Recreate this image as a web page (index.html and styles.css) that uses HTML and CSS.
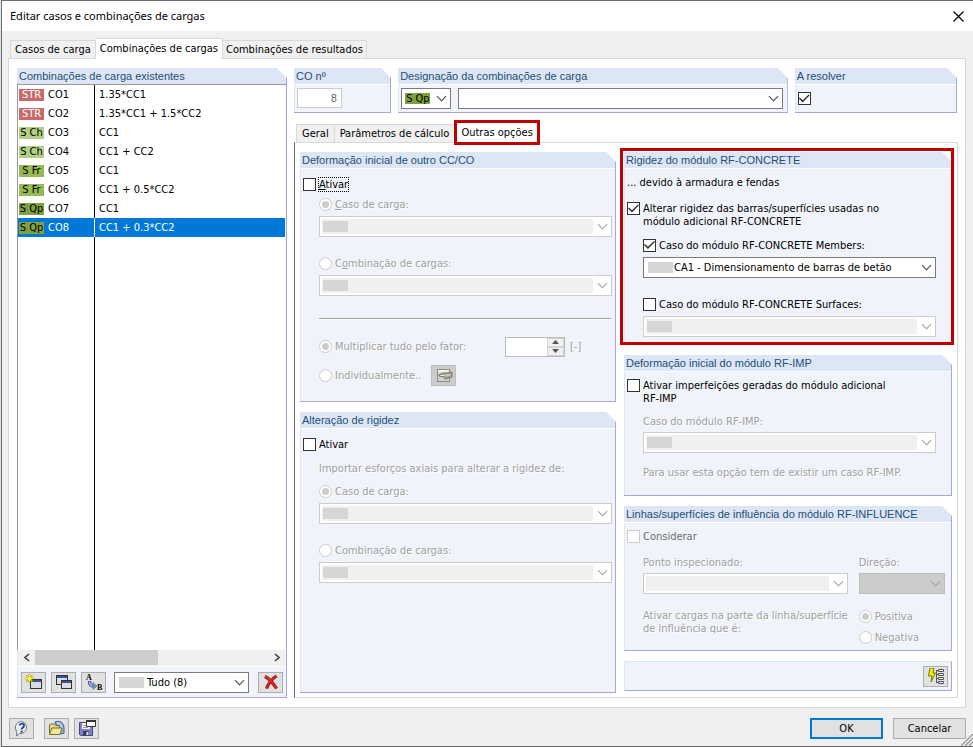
FILE: index.html
```html
<!DOCTYPE html>
<html lang="pt">
<head>
  <meta charset="UTF-8">
  <meta name="viewport" content="width=device-width, initial-scale=1">
  <title>Editar casos e combinações de cargas</title>
  <link rel="stylesheet" href="styles.css">
</head>
<body>
  <div class="dialog">
    <header class="titlebar">
      <h1>Editar casos e combinações de cargas</h1>
      <button class="close" aria-label="Fechar">
        <svg width="11" height="11" viewBox="0 0 11 11"><path d="M.5 .5l10 10M10.5 .5l-10 10" stroke="#000" stroke-width="1.2"/></svg>
      </button>
    </header>

    <nav class="tabs main-tabs">
      <button class="tab">Casos de carga</button>
      <button class="tab active">Combinações de cargas</button>
      <button class="tab">Combinações de resultados</button>
    </nav>

    <main class="pane">
      <section class="group list-panel">
        <h2>Combinações de carga existentes</h2>
        <div class="list">
          <table>
            <tr><td><span class="badge str">STR</span>CO1</td><td>1.35*CC1</td></tr>
            <tr><td><span class="badge str">STR</span>CO2</td><td>1.35*CC1 + 1.5*CC2</td></tr>
            <tr><td><span class="badge ch">S Ch</span>CO3</td><td>CC1</td></tr>
            <tr><td><span class="badge ch">S Ch</span>CO4</td><td>CC1 + CC2</td></tr>
            <tr><td><span class="badge fr">S Fr</span>CO5</td><td>CC1</td></tr>
            <tr><td><span class="badge fr">S Fr</span>CO6</td><td>CC1 + 0.5*CC2</td></tr>
            <tr><td><span class="badge qp">S Qp</span>CO7</td><td>CC1</td></tr>
            <tr class="selected"><td><span class="badge qp">S Qp</span>CO8</td><td>CC1 + 0.3*CC2</td></tr>
          </table>
        </div>
        <div class="scrollbar">
          <svg width="17" height="15" viewBox="0 0 17 15"><path d="M11 4L7 7.500l4 3.500" fill="none" stroke="#404040" stroke-width="1.600"/></svg>
          <div class="track"><div class="thumb"></div></div>
          <svg width="17" height="15" viewBox="0 0 17 15"><path d="M7 4l4 3.500L7 11" fill="none" stroke="#404040" stroke-width="1.600"/></svg>
        </div>
        <div class="list-tools">
          <button class="tool" aria-label="Novo">
            <svg width="18" height="17" viewBox="0 0 18 17">
              <rect x="5.500" y="5.500" width="11" height="9" fill="#d9dce0" stroke="#333"/>
              <path d="M6 6h10v2H6z" fill="#38529c"/>
              <path d="M4.500 0v9M0 4.500h9M1.500 1.500l6 6M7.500 1.500l-6 6" stroke="#b8a800" stroke-width="1.600"/>
              <path d="M4.500 1v7M1 4.500h7M2.500 2.500l4 4M6.500 2.500l-4 4" stroke="#fff34a"/>
            </svg>
          </button>
          <button class="tool" aria-label="Copiar">
            <svg width="18" height="17" viewBox="0 0 18 17">
              <rect x="1.500" y="1.500" width="11" height="9" fill="#d9dce0" stroke="#333"/>
              <path d="M2 2h10v2H2z" fill="#38529c"/>
              <rect x="6.500" y="6.500" width="10" height="8" fill="#d9dce0" stroke="#333"/>
              <path d="M7 7h9v2H7z" fill="#38529c"/>
            </svg>
          </button>
          <button class="tool" aria-label="Renumerar">
            <svg width="18" height="17" viewBox="0 0 18 17">
              <text x="1" y="6" class="ab">A</text>
              <text x="12" y="16" class="ab">B</text>
              <path d="M4.500 7c0 3.500 1 5 4.500 5" fill="none" stroke="#38548c" stroke-width="3.500"/>
              <path d="M4.500 7.500c0 3 1 4.500 4.500 4.500" fill="none" stroke="#a9c0e6" stroke-width="1.500"/>
              <path d="M8 8.500l4 3.500-4 3.500z" fill="#7895c8" stroke="#38548c" stroke-width=".5"/>
            </svg>
          </button>
          <div class="combo filter">
            <select class="swatch" aria-label="Filtro"><option>Tudo (8)</option></select>
          </div>
          <button class="tool" aria-label="Apagar">
            <svg width="18" height="17" viewBox="0 0 18 17">
              <path d="M3 2.500C7 4.500 11 9 14.500 14.500M14.500 2C9.500 5 6.500 9.500 4.500 14.500" fill="none" stroke="#6e1414" stroke-width="3.200"/>
              <path d="M3 2.500C7 4.500 11 9 14.500 14.500M14.500 2C9.500 5 6.500 9.500 4.500 14.500" fill="none" stroke="#e02424" stroke-width="2"/>
            </svg>
          </button>
        </div>
      </section>

      <div class="details">
        <div class="top-groups">
          <section class="group">
            <h2><label for="co-no">CO nº</label></h2>
            <div class="top-body"><input id="co-no" class="number" type="text" value="8" disabled></div>
          </section>
          <section class="group">
            <h2><label for="co-name">Designação da combinações de carga</label></h2>
            <div class="top-body designation">
              <div class="combo kind"><select aria-label="Tipo"><option>S Qp</option></select></div>
              <div class="combo"><select id="co-name"><option></option></select></div>
            </div>
          </section>
          <section class="group">
            <h2><label for="solve">A resolver</label></h2>
            <div class="top-body solve"><input id="solve" type="checkbox" checked></div>
          </section>
        </div>

        <nav class="tabs sub-tabs">
          <button class="tab">Geral</button>
          <button class="tab">Parâmetros de cálculo</button>
          <button class="tab active marked">Outras opções</button>
        </nav>

        <div class="options">
          <div class="column">
            <section class="group">
              <h2>Deformação inicial de outro CC/CO</h2>
              <div class="body initial">
                <label class="check focus"><input type="checkbox"><span><u>A</u>tivar</span></label>
                <div class="indent">
                  <label class="check off"><input type="radio" name="def" checked disabled><span><u>C</u>aso de carga:</span></label>
                  <div class="combo"><select class="swatch" aria-label="Caso de carga" disabled><option></option></select></div>
                  <label class="check off spaced"><input type="radio" name="def" disabled><span>C<u>o</u>mbinação de cargas:</span></label>
                  <div class="combo"><select class="swatch" aria-label="Combinação de cargas" disabled><option></option></select></div>
                  <hr>
                  <div class="factor">
                    <label class="check off"><input type="radio" name="mode" checked disabled><span>Multiplicar tudo pelo fator:</span></label>
                    <div class="spin">
                      <input type="text" aria-label="Fator" disabled>
                      <button aria-label="Mais" disabled><svg width="7" height="4" viewBox="0 0 7 4"><path d="M0 4l3.500-4L7 4z" fill="#555"/></svg></button>
                      <button aria-label="Menos" disabled><svg width="7" height="4" viewBox="0 0 7 4"><path d="M0 0l3.500 4L7 0z" fill="#555"/></svg></button>
                    </div>
                    <span class="off">[-]</span>
                  </div>
                  <div class="single">
                    <label class="check off"><input type="radio" name="mode" disabled><span>Individualmente..</span></label>
                    <button class="tool" aria-label="Editar" disabled>
                      <svg width="18" height="17" viewBox="0 0 18 17">
                        <rect x="2.500" y="2.500" width="12" height="12" fill="#d2d2c8" stroke="#8c8c80"/>
                        <path d="M3 3h11v2H3z" fill="#f4f4ec"/>
                        <path d="M4 8l5-2h4l4-1v5l-4 1-3 1-1-2-5-1z" fill="#a8a89c" stroke="#77776c"/>
                        <path d="M5 8.500h5M11 8h4" stroke="#e4e4dc"/>
                      </svg>
                    </button>
                  </div>
                </div>
              </div>
            </section>

            <section class="group grow">
              <h2>Alteração de rigidez</h2>
              <div class="body">
                <label class="check"><input type="checkbox"><span>Ativar</span></label>
                <div class="indent">
                  <p class="off import">Importar esforços axiais para alterar a rigidez de:</p>
                  <label class="check off"><input type="radio" name="rig" checked disabled><span>Caso de carga:</span></label>
                  <div class="combo"><select class="swatch" aria-label="Caso de carga" disabled><option></option></select></div>
                  <label class="check off spaced"><input type="radio" name="rig" disabled><span>Combinação de cargas:</span></label>
                  <div class="combo"><select class="swatch" aria-label="Combinação de cargas" disabled><option></option></select></div>
                </div>
              </div>
            </section>
          </div>

          <div class="column">
            <div class="marked">
              <section class="group">
                <h2>Rigidez do módulo RF-CONCRETE</h2>
                <div class="body concrete">
                  <p>... devido à armadura e fendas</p>
                  <label class="check two-lines"><input type="checkbox" checked><span>Alterar rigidez das barras/superfícies usadas no módulo adicional RF-CONCRETE</span></label>
                  <div class="indent">
                    <label class="check"><input type="checkbox" checked><span>Caso do módulo RF-CONCRETE Members:</span></label>
                    <div class="combo"><select class="swatch" aria-label="Caso RF-CONCRETE Members"><option>CA1 - Dimensionamento de barras de betão</option></select></div>
                    <label class="check spaced"><input type="checkbox"><span>Caso do módulo RF-CONCRETE Surfaces:</span></label>
                    <div class="combo"><select class="swatch" aria-label="Caso RF-CONCRETE Surfaces" disabled><option></option></select></div>
                  </div>
                </div>
              </section>
            </div>

            <section class="group">
              <h2>Deformação inicial do módulo RF-IMP</h2>
              <div class="body imp">
                <label class="check two-lines"><input type="checkbox"><span>Ativar imperfeições geradas do módulo adicional RF-IMP</span></label>
                <div class="indent">
                  <label class="off line" for="imp-case">Caso do módulo RF-IMP:</label>
                  <div class="combo"><select id="imp-case" class="swatch" disabled><option></option></select></div>
                  <p class="off note">Para usar esta opção tem de existir um caso RF-IMP.</p>
                </div>
              </div>
            </section>

            <section class="group">
              <h2>Linhas/superfícies de influência do módulo RF-INFLUENCE</h2>
              <div class="body influence">
                <label class="check dim"><input type="checkbox" disabled><span>Considerar</span></label>
                <div class="indent influence-grid">
                  <div>
                    <label class="off line" for="point">Ponto inspecionado:</label>
                    <div class="combo"><select id="point" disabled><option></option></select></div>
                  </div>
                  <div>
                    <label class="off line" for="direction">Direção:</label>
                    <div class="combo"><select id="direction" class="grey" disabled><option></option></select></div>
                  </div>
                  <p class="off part">Ativar cargas na parte da linha/superfície<br>de influência que é:</p>
                  <div class="signs">
                    <label class="check off"><input type="radio" name="sign" checked disabled><span>Positiva</span></label>
                    <label class="check off"><input type="radio" name="sign" disabled><span>Negativa</span></label>
                  </div>
                </div>
              </div>
            </section>

            <div class="strip">
              <button class="tool" aria-label="Opções">
                <svg width="18" height="17" viewBox="0 0 18 17">
                  <path d="M3 0h4L6 5h2.500L4 14l1-6H1.500z" fill="#f8f000" stroke="#77750a"/>
                  <path d="M9.500 2v13M9.500 2.500h3M9.500 6.500h3M9.500 10.500h3M9.500 14.500h3" stroke="#555" fill="none"/>
                  <path d="M11.500 1.500h5v2h-5zM11.500 5.500h5v2h-5zM11.500 9.500h5v2h-5zM11.500 13.500h5v2h-5z" fill="#eee" stroke="#555"/>
                </svg>
              </button>
            </div>
          </div>
        </div>
      </div>
    </main>

    <footer class="footer">
      <button class="tool" aria-label="Ajuda">
        <svg width="18" height="17" viewBox="0 0 18 17">
          <path d="M8.500 1.500a6 6 0 1 1-2 12L3.500 16l.3-4.200A6.200 6.200 0 0 1 8.500 1.500z" fill="#eef3fa" stroke="#6b7480"/>
          <path d="M6.500 5.500c.5-2.500 4.800-2.500 4.500.3-.2 1.700-2.300 1.700-2.300 3.700" fill="none" stroke="#24408c" stroke-width="1.800"/>
          <rect x="7.500" y="10.600" width="2" height="2" fill="#24408c"/>
        </svg>
      </button>
      <button class="tool folder" aria-label="Abrir">
        <svg width="18" height="17" viewBox="0 0 18 17">
          <path d="M7 2c5-2 9 1 9 6v5l-3 1z" fill="#9bb8dc" stroke="#3d5a8c"/>
          <path d="M9 3c3 0 4.500 2 4.500 6" fill="none" stroke="#e8f0fa"/>
          <path d="M1.500 14V5l1-1h4l1 1.500h4V8" fill="#e4d88c" stroke="#77702c"/>
          <path d="M1.500 14.500L4 8h10l-2 6.500z" fill="#f2e79c" stroke="#77702c"/>
        </svg>
      </button>
      <button class="tool" aria-label="Guardar">
        <svg width="18" height="17" viewBox="0 0 18 17">
          <path d="M1.500 2.500h13v13h-12l-1-1z" fill="#7d80c8" stroke="#44477c"/>
          <path d="M4 3h8v6H4z" fill="#f4f4f8"/>
          <path d="M5 5.500h4M5 7.500h5" stroke="#999"/>
          <path d="M5 11h6v4H5z" fill="#3c3c50"/><path d="M8.500 12h2v3h-2z" fill="#e8e8f0"/>
          <path d="M8.500 .5h9v6h-9z" fill="#fff" stroke="#333"/><path d="M8 0h10v2H8z" fill="#333"/>
        </svg>
      </button>
      <button class="push default">OK</button>
      <button class="push">Cancelar</button>
      <svg class="grip" width="12" height="12" viewBox="0 0 12 12"><path d="M0 12L12 0M4 12l8-8M8 12l4-4" stroke="#8c8c8c" stroke-width="1.200"/></svg>
    </footer>
  </div>
</body>
</html>
```
FILE: styles.css
```css
* {
  box-sizing: border-box;
}
body {
  margin: 0;
  padding-left: 1px;
  background: #e3e3e3;
  font: 11px/13px "DejaVu Sans Condensed", "Liberation Sans", sans-serif;
  color: #000;
}
h1, h2, p {
  margin: 0;
  font-weight: normal;
}
button, input, select {
  font: inherit;
  color: inherit;
}
svg {
  display: block;
}

.dialog {
  display: flex;
  flex-direction: column;
  min-height: 100vh;
  background: #f0f0f0;
  border: 1px solid #6b6b6b;
  border-right: 0;
}
.titlebar {
  display: flex;
  align-items: center;
  justify-content: space-between;
  height: 30px;
  padding: 0 9px 0 8px;
  background: #fff;
}
h1 {
  font: 11px/16px "Noto Sans", "Open Sans", sans-serif;
}
.close {
  padding: 0;
  border: 0;
  background: none;
}

/* tabs */
.tabs {
  display: flex;
  align-items: flex-end;
}
.tab {
  height: 18px;
  padding: 0 3px;
  border: 1px solid #d9d9d9;
  border-width: 1px 1px 0 0;
  background: #f0f0f0;
  white-space: nowrap;
}
.tab:first-child {
  padding: 0 4px;
  border-left-width: 1px;
}
.tab.active {
  height: 21px;
  margin-bottom: -1px;
  padding: 0 4px 2px;
  background: #fff;
  position: relative;
}
.main-tabs {
  height: 27px;
  padding-left: 8px;
}
.sub-tabs {
  height: 29px;
  padding-left: 2px;
}
.sub-tabs .tab {
  padding: 0 5px;
}
.sub-tabs .tab.active {
  padding: 0 6px 2px;
}
.marked {
  position: relative;
}
.marked::after {
  content: "";
  position: absolute;
  inset: -4px -2px 0 -4px;
  border: 3px solid #c00000;
  pointer-events: none;
}
.tab.marked::after {
  inset: -3px -1px -2px -1px;
}

.pane {
  flex: 1;
  display: flex;
  gap: 7px;
  margin: 0 7px 0 6px;
  padding: 9px 7px 9px 8px;
  background: #fff;
  border: 1px solid #d9d9d9;
}

/* group boxes with the cut corner */
.group {
  background: #f0f3f9;
  border: 1px solid #a6a6e6;
  border-width: 0 1px 1px 0;
  box-shadow: inset 1px 0 #dce6f4;
  clip-path: polygon(0 0, calc(100% - 10px) 0, 100% 10px, 100% 100%, 0 100%);
}
h2 {
  height: 17px;
  padding-left: 2px;
  background: #dce6f4;
  border-bottom: 1px solid #fff;
  font: 11px/16px "Liberation Sans", Arial, sans-serif;
  color: #1f4e79;
  white-space: nowrap;
}

/* list of combinations */
.list-panel {
  flex: 0 0 270px;
  display: flex;
  flex-direction: column;
}
.list-panel h2 {
  border-bottom-color: #999;
}
.list {
  flex: 1;
  margin-right: 1px;
  border-left: 1px solid #999;
  background: linear-gradient(#000, #000) 76px 0 / 1px 100% no-repeat #fff;
}
table {
  width: 100%;
  border-collapse: collapse;
}
td {
  height: 19px;
  padding: 0 0 0 4px;
  white-space: nowrap;
}
td:first-child {
  width: 77px;
  padding-left: 1px;
}
.selected {
  background: #0078d7;
  color: #fff;
}
.selected td:first-child {
  box-shadow: inset -1px 0 #fff;
}
.badge {
  display: inline-block;
  width: 25px;
  height: 12px;
  margin-right: 4px;
  line-height: 12px;
  text-align: center;
  color: #000;
}
.str { background: #c96a6a; color: #fff; }
.ch { background: #b1cf85; }
.fr { background: #95b955; }
.qp { background: #80a13f; }

.scrollbar {
  display: flex;
  height: 17px;
  padding-bottom: 1px;
  margin: 0 1px;
  background: #f0f0f0;
  border-bottom: 1px solid #fff;
}
.track {
  flex: 1;
}
.thumb {
  width: 53%;
  height: 15px;
  background: #cdcdcd;
}
.list-tools {
  display: flex;
  gap: 5px;
  padding: 5px 3px 4px 4px;
}
.filter {
  flex: 1;
  margin: 0 4px 0 3px;
}

/* small buttons with an icon */
.tool {
  display: flex;
  align-items: center;
  justify-content: center;
  width: 25px;
  height: 21px;
  padding: 0;
  background: #e1e1e1;
  border: 1px solid #adadad;
}
.tool:disabled {
  background: #ccc;
  border-color: #bfbfbf;
}
.ab {
  font: bold 8px "Liberation Serif", serif;
}

/* drop-downs */
.combo {
  position: relative;
}
.check + .combo {
  margin-top: 2px;
}
.combo::after {
  content: "";
  position: absolute;
  right: 6px;
  top: 5px;
  width: 6px;
  height: 6px;
  border: solid #444;
  border-width: 0 1px 1px 0;
  transform: rotate(45deg);
  pointer-events: none;
}
select {
  appearance: none;
  display: block;
  width: 100%;
  height: 21px;
  padding: 0 20px 0 4px;
  border: 1px solid #7a7a7a;
  border-radius: 0;
  background: #fff;
}
select.swatch {
  padding-left: 30px;
  background: linear-gradient(#d6d6d6, #d6d6d6) 4px 4px / 25px 11px no-repeat #fff;
}
.filter select.swatch {
  padding-left: 32px;
}
select:disabled {
  opacity: 1;
  border-color: #ccc;
  background: linear-gradient(#f0f0f0, #f0f0f0) 2px 2px / calc(100% - 20px) 15px no-repeat #fff;
}
select.swatch:disabled {
  background: linear-gradient(#d6d6d6, #d6d6d6) 3px 4px / 25px 11px no-repeat,
    linear-gradient(#f0f0f0, #f0f0f0) 2px 2px / calc(100% - 20px) 15px no-repeat #fff;
}
select.grey:disabled {
  background: #ccc;
  border-color: #bfbfbf;
}
.combo:has(:disabled)::after {
  border-color: #a0a0a0;
}
.kind select {
  background: linear-gradient(#80a13f, #80a13f) 3px 4px / 25px 11px no-repeat #fff;
}

/* right side */
.details {
  flex: 1;
  display: flex;
  flex-direction: column;
  min-width: 0;
}
.top-groups {
  display: grid;
  grid-template-columns: 97fr 389fr 162fr;
  gap: 7px;
  padding-right: 1px;
}
.top-body {
  display: flex;
  align-items: center;
  padding: 3px 3px;
}
.number {
  width: 45px;
  height: 20px;
  padding: 0 4px;
  border: 1px solid #ccc;
  background: #fff;
  color: #6d6d6d;
  text-align: right;
}
.designation {
  display: grid;
  grid-template-columns: 50px 1fr;
  gap: 7px;
  padding-right: 4px;
}
.solve {
  height: 27px;
}
.options {
  flex: 1;
  display: grid;
  grid-template-columns: 316fr 328fr;
  gap: 8px;
  padding: 9px 5px 4px;
  border: 1px solid #d9d9d9;
  border-left-color: #666;
}
.column {
  display: flex;
  flex-direction: column;
  gap: 10px;
  min-width: 0;
}
.grow {
  flex: 1;
}

.body {
  padding: 5px 3px;
}
.indent {
  padding-left: 16px;
}
.check {
  display: flex;
  align-items: center;
  gap: 3px;
  height: 20px;
}
.two-lines {
  height: 26px;
  align-items: flex-start;
}
.two-lines span {
  max-width: 250px;
}
.spaced {
  margin-top: 16px;
}
.focus span {
  outline: 1px dotted #000;
}
.check input {
  flex: none;
}
input[type="checkbox"], input[type="radio"] {
  appearance: none;
  position: relative;
  width: 13px;
  height: 13px;
  margin: 0;
  border: 1px solid #333;
  background: #fff;
}
input[type="checkbox"]:checked::after {
  content: "";
  position: absolute;
  inset: 1px 0 1px 0;
  background: #333;
  clip-path: polygon(0 50%, 9% 40%, 36% 70%, 90% 5%, 100% 15%, 36% 95%);
}
input[type="radio"] {
  border-radius: 50%;
}
input[type]:disabled {
  border-color: #ccc;
}
input[type="radio"]:checked::after {
  content: "";
  position: absolute;
  inset: 2px;
  border-radius: 50%;
  background: #ccc;
}
.off {
  color: #a0a0a0;
  text-shadow: 1px 1px #fff;
}
.dim {
  color: #6d6d6d;
}
hr {
  margin: 22px 1px 16px 0;
  border: 0;
  border-top: 1px solid #a0a0a0;
  border-bottom: 1px solid #fff;
}
.initial {
  padding-bottom: 15px;
}
.factor, .single {
  display: flex;
  align-items: center;
}
.factor {
  gap: 5px;
  height: 21px;
}
.factor .check {
  width: 181px;
}
.single {
  gap: 10px;
  margin-top: 8px;
}
.spin {
  display: grid;
  grid-template-columns: 1fr 17px;
  width: 60px;
  height: 20px;
  border: 1px solid #bbb;
  background: #f0f0f0;
}
.spin input {
  grid-row: span 2;
  width: 100%;
  min-width: 0;
  padding: 0 3px;
  border: 0;
  background: #fff;
}
.spin button {
  display: flex;
  align-items: center;
  justify-content: center;
  padding: 0;
  border: 1px solid #d4d4d4;
  background: #f0f0f0;
}
.import {
  padding: 8px 0 6px;
}
.concrete p {
  padding: 2px 0 13px;
}
.concrete .indent {
  margin-top: 7px;
}
.concrete {
  padding-bottom: 7px;
}
.line {
  display: block;
  height: 20px;
  line-height: 20px;
}
.imp .indent {
  margin-top: 7px;
}
.imp {
  padding: 7px 3px 16px;
}
.note {
  padding-top: 13px;
}
.influence-grid {
  display: grid;
  grid-template-columns: 204fr 87fr;
  column-gap: 11px;
  row-gap: 12px;
  margin-top: 7px;
}
.influence {
  padding: 3px 3px 2px;
}
.part {
  padding-top: 3px;
  white-space: nowrap;
}
.signs .check {
  height: 21px;
}
.column:last-child .indent {
  padding-right: 12px;
}
.column:last-child .influence-grid {
  padding-right: 3px;
}
.strip {
  display: flex;
  justify-content: flex-end;
  height: 30px;
  padding: 4px 3px;
  background: #f0f3f9;
  border: 1px solid #dce6f4;
  border-right-color: #a6a6e6;
  border-bottom-color: #a6a6e6;
}

/* bottom row */
.footer {
  position: relative;
  display: flex;
  gap: 5px;
  padding: 10px 7px 7px;
}
.folder {
  margin-left: 5px;
}
.push {
  width: 73px;
  height: 21px;
  padding: 0;
  border: 1px solid #adadad;
  background: #e1e1e1;
}
.default {
  margin-left: auto;
  margin-right: 5px;
  border: 2px solid #0078d7;
}
.grip {
  position: absolute;
  right: 0;
  bottom: 0;
}
```
